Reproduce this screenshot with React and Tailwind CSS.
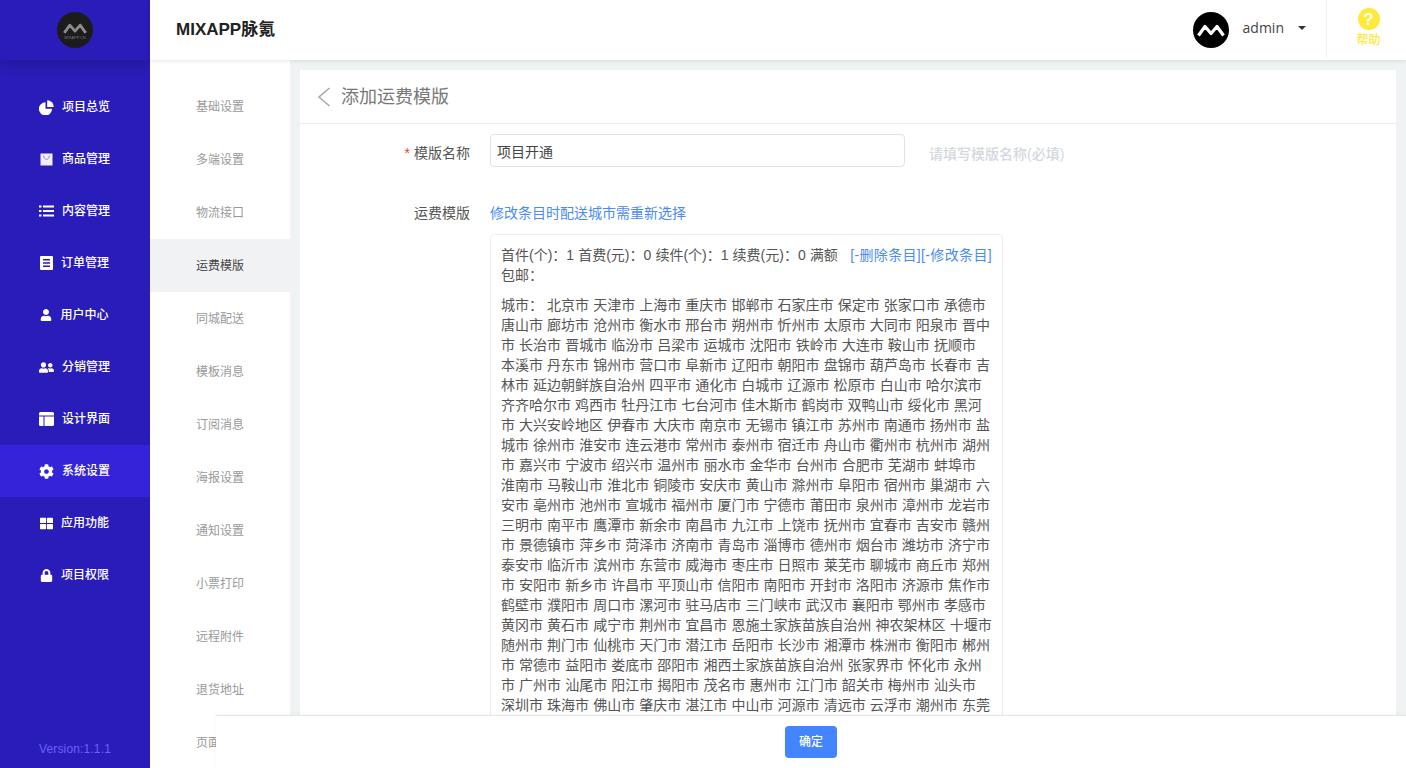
import React from 'react';
import { FaUser, FaUserFriends, FaCog, FaThLarge, FaLock } from 'react-icons/fa';

const font = { fontFamily: '"Liberation Sans", "Noto Sans CJK SC", sans-serif' };

function PieIcon() {
  return (
    <svg width="15" height="15" viewBox="0 0 15 15" fill="currentColor">
      <path d="M6.500 2.200v6.600h6.600a6.600 6.600 0 1 1-6.600-6.600z" />
      <path d="M8.200 0.300a6.600 6.600 0 0 1 6.600 6.600h-6.600z" />
    </svg>
  );
}

function BagIcon() {
  return (
    <svg width="15" height="13" viewBox="0 0 15 13">
      <rect x="1.500" y="0.500" width="12" height="12" fill="#f1effd" />
      <path d="M4.500 2.500c.4 2.600 1.500 3.800 3 3.800s2.600-1.200 3-3.800" fill="none" stroke="#8f88dc" strokeWidth="1" />
    </svg>
  );
}

function ListIcon() {
  return (
    <svg width="15" height="12" viewBox="0 0 15 12" fill="currentColor">
      <path d="M0 .500h2.500v2h-2.500zM4 .500h11v2h-11zM0 5h2.500v2h-2.500zM4 5h11v2h-11zM0 9.500h2.500v2h-2.500zM4 9.500h11v2h-11z" />
    </svg>
  );
}

function OrderIcon() {
  return (
    <svg width="13" height="14" viewBox="0 0 13 14" fill="currentColor">
      <path fillRule="evenodd" d="M0 1a1 1 0 0 1 1-1h11a1 1 0 0 1 1 1v12a1 1 0 0 1-1 1h-11a1 1 0 0 1-1-1zM3 3v1.500h7v-1.500zM3 6.200v1.500h7v-1.500zM3 9.500v1.500h7v-1.500z" />
    </svg>
  );
}

function LayoutIcon() {
  return (
    <svg width="15" height="14" viewBox="0 0 15 14" fill="currentColor">
      <path d="M0 1.500a1.500 1.500 0 0 1 1.500-1.500h12a1.500 1.500 0 0 1 1.500 1.500v2h-15z" />
      <path d="M0 4.500h4.500v9.500h-3a1.500 1.500 0 0 1-1.500-1.500zM5.500 4.500h9.500v8a1.500 1.500 0 0 1-1.500 1.500h-8z" />
    </svg>
  );
}

function MMark({ color, width, stroke }) {
  return (
    <svg width={width} viewBox="0 0 28 13" fill="none" stroke={color} strokeWidth={stroke} strokeLinejoin="round">
      <path d="M1.500 11.500 L8 2.500 L14 9.500 L20 2.500 L26.500 11.500" />
    </svg>
  );
}

const menu = [
  { name: '项目总览', icon: <PieIcon /> },
  { name: '商品管理', icon: <BagIcon /> },
  { name: '内容管理', icon: <ListIcon /> },
  { name: '订单管理', icon: <OrderIcon /> },
  { name: '用户中心', icon: <FaUser size={12} /> },
  { name: '分销管理', icon: <FaUserFriends size={15} /> },
  { name: '设计界面', icon: <LayoutIcon /> },
  { name: '系统设置', icon: <FaCog size={15} />, active: true },
  { name: '应用功能', icon: <FaThLarge size={13} /> },
  { name: '项目权限', icon: <FaLock size={13} /> },
];

const subMenu = [
  '基础设置', '多端设置', '物流接口', '运费模版', '同城配送', '模板消息', '订阅消息',
  '海报设置', '通知设置', '小票打印', '远程附件', '退货地址', '页面设置',
];

const cities =
  '北京市 天津市 上海市 重庆市 邯郸市 石家庄市 保定市 张家口市 承德市 唐山市 廊坊市 沧州市 衡水市 邢台市 朔州市 忻州市 太原市 大同市 阳泉市 晋中市 长治市 晋城市 临汾市 吕梁市 运城市 沈阳市 铁岭市 大连市 鞍山市 抚顺市 本溪市 丹东市 锦州市 营口市 阜新市 辽阳市 朝阳市 盘锦市 葫芦岛市 长春市 吉林市 延边朝鲜族自治州 四平市 通化市 白城市 辽源市 松原市 白山市 哈尔滨市 齐齐哈尔市 鸡西市 牡丹江市 七台河市 佳木斯市 鹤岗市 双鸭山市 绥化市 黑河市 大兴安岭地区 伊春市 大庆市 南京市 无锡市 镇江市 苏州市 南通市 扬州市 盐城市 徐州市 淮安市 连云港市 常州市 泰州市 宿迁市 舟山市 衢州市 杭州市 湖州市 嘉兴市 宁波市 绍兴市 温州市 丽水市 金华市 台州市 合肥市 芜湖市 蚌埠市 淮南市 马鞍山市 淮北市 铜陵市 安庆市 黄山市 滁州市 阜阳市 宿州市 巢湖市 六安市 亳州市 池州市 宣城市 福州市 厦门市 宁德市 莆田市 泉州市 漳州市 龙岩市 三明市 南平市 鹰潭市 新余市 南昌市 九江市 上饶市 抚州市 宜春市 吉安市 赣州市 景德镇市 萍乡市 菏泽市 济南市 青岛市 淄博市 德州市 烟台市 潍坊市 济宁市 泰安市 临沂市 滨州市 东营市 威海市 枣庄市 日照市 莱芜市 聊城市 商丘市 郑州市 安阳市 新乡市 许昌市 平顶山市 信阳市 南阳市 开封市 洛阳市 济源市 焦作市 鹤壁市 濮阳市 周口市 漯河市 驻马店市 三门峡市 武汉市 襄阳市 鄂州市 孝感市 黄冈市 黄石市 咸宁市 荆州市 宜昌市 恩施土家族苗族自治州 神农架林区 十堰市 随州市 荆门市 仙桃市 天门市 潜江市 岳阳市 长沙市 湘潭市 株洲市 衡阳市 郴州市 常德市 益阳市 娄底市 邵阳市 湘西土家族苗族自治州 张家界市 怀化市 永州市 广州市 汕尾市 阳江市 揭阳市 茂名市 惠州市 江门市 韶关市 梅州市 汕头市 深圳市 珠海市 佛山市 肇庆市 湛江市 中山市 河源市 清远市 云浮市 潮州市 东莞市';

export default function App() {
  return (
    <div style={font} className="relative flex h-screen overflow-hidden bg-[#f0f3f4] text-sm text-[#555]">
      <aside className="flex w-[150px] shrink-0 flex-col bg-[#2a1cb8]">
        <div className="flex h-[60px] shrink-0 items-center justify-center shadow-[0_4px_12px_rgba(0,0,0,0.2)]">
          <div className="flex h-9 w-9 flex-col items-center justify-center rounded-full bg-[#1c1c1c] pt-[3px]">
            <MMark color="#8c8c8c" width={24} stroke={3.2} />
            <span className="mt-[2px] text-[4px] leading-none text-[#777]">MIXAPP.CN</span>
          </div>
        </div>
        <nav className="pt-[21px]">
          {menu.map((item) => (
            <div
              key={item.name}
              className={`flex h-[52px] items-center justify-center gap-2 pr-px text-xs font-medium text-white ${item.active ? 'bg-[#3523d9]' : ''}`}
            >
              {item.icon}
              <span>{item.name}</span>
            </div>
          ))}
        </nav>
        <div className="mt-auto pb-[11px] text-center text-xs tracking-[0.15px] text-[#6a60ff]">Version:1.1.1</div>
      </aside>

      <div className="flex min-w-0 flex-1 flex-col">
        <header className="relative z-10 flex h-[60px] shrink-0 items-center bg-white pl-[26px] shadow-[0_1px_4px_rgba(0,0,0,0.1)]">
          <h1 className="text-[17px] font-bold text-[#222]">MIXAPP脉氪</h1>
          <div className="ml-auto flex h-full items-center">
            <div className="flex h-9 w-9 items-center justify-center rounded-full bg-black">
              <MMark color="#fff" width={28} stroke={3.2} />
            </div>
            <span style={{ fontFamily: '"Open Sans", sans-serif' }} className="mb-1 ml-[14px] text-sm text-[#444]">admin</span>
            <span className="mb-[4px] ml-[14px] h-0 w-0 border-x-[4px] border-t-[4px] border-x-transparent border-t-[#333]" />
            <div className="ml-[20px] flex h-[58px] w-[80px] flex-col items-center self-start border-l border-[#eee] pl-[4px] pt-2">
              <div className="flex h-[22px] w-[22px] items-center justify-center rounded-full bg-[#ffe93b] text-[17px] font-bold leading-none text-white">?</div>
              <span className="mt-[2px] text-xs font-medium text-[#ffe93b]">帮助</span>
            </div>
          </div>
        </header>

        <div className="flex min-h-0 flex-1">
          <div className="w-[140px] shrink-0 bg-white pt-5">
            {subMenu.map((name) => (
              <div
                key={name}
                className={`flex h-[53px] items-center justify-center pt-px text-xs ${name === '运费模版' ? 'bg-[#f0f2f4] text-[#444]' : 'text-[#999]'}`}
              >
                {name}
              </div>
            ))}
          </div>

          <main className="min-w-0 flex-1 overflow-hidden px-[10px] pt-[10px]">
            <div className="bg-white">
              <div className="flex h-[54px] items-center border-b border-[#eee] pl-[17px]">
                <svg width="14" height="20" viewBox="0 0 14 20" fill="none" stroke="#aaa" strokeWidth="1.6">
                  <path d="M12.500 1 L2 10 L12.500 19" />
                </svg>
                <span className="ml-[10px] text-lg text-[#777]">添加运费模版</span>
              </div>
              <div className="flex items-center pt-[10px]">
                <label className="w-[190px] pr-5 pt-[5px] text-right">
                  <span className="mr-1 text-[#ed4014]">*</span>模版名称
                </label>
                <input
                  readOnly
                  value="项目开通"
                  className="h-[33px] w-[415px] rounded border border-[#dde3ea] px-[6px] text-sm text-[#444] outline-none"
                />
                <span className="ml-6 pt-[7px] font-medium text-[#d3d7e0]">请填写模版名称(必填)</span>
              </div>
              <div className="mt-[36px] flex">
                <label className="w-[190px] pr-5 text-right leading-5">运费模版</label>
                <div className="w-[513px]">
                  <a className="leading-5 text-[#4b8bf4]">修改条目时配送城市需重新选择</a>
                  <div className="mt-[11px] rounded border border-[#eee] px-[10px] py-[10px] leading-5 [word-spacing:0.2px]">
                    <p>
                      <span className="float-right tracking-[0.35px] text-[#4b8bf4]">[-删除条目][-修改条目]</span>
                      首件(个)：1 首费(元)：0 续件(个)：1 续费(元)：0 满额 包邮：
                    </p>
                    <p className="mt-[10px]">城市： {cities}</p>
                  </div>
                </div>
              </div>
            </div>
          </main>
        </div>
      </div>

      <div className="absolute bottom-0 left-[216px] right-0 flex h-[53px] items-center justify-center border-t border-[#e5e5e5] bg-white shadow-[0_-1px_4px_rgba(0,0,0,0.04)]">
        <button className="h-8 w-[52px] rounded bg-[#4384ff] text-xs font-medium text-white">确定</button>
      </div>
    </div>
  );
}
